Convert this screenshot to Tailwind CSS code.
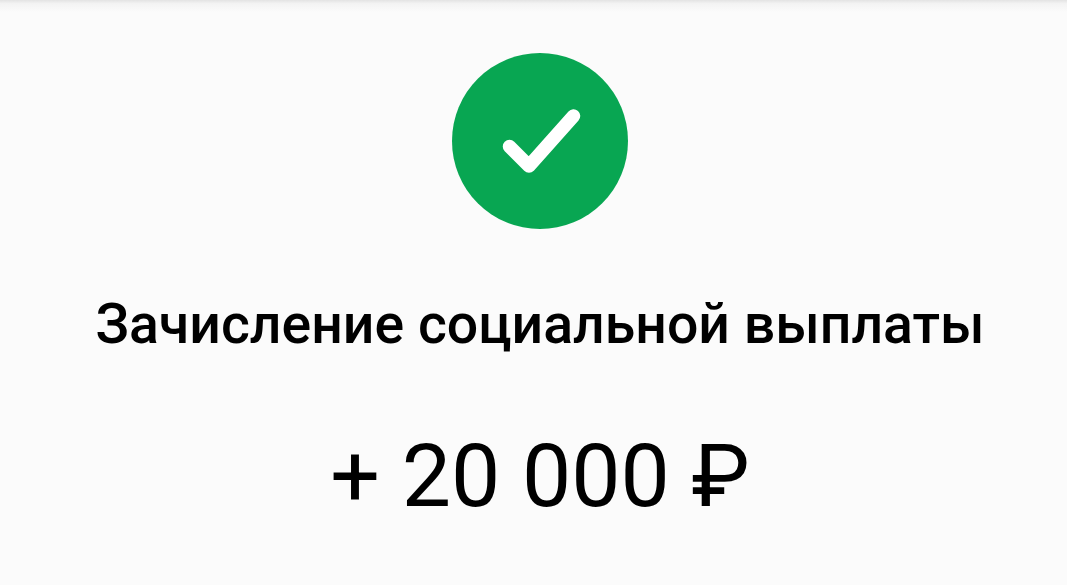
<!DOCTYPE html>
<html lang="ru">
<head>
  <meta charset="UTF-8" />
  <meta name="viewport" content="width=device-width, initial-scale=1.0" />
  <title>Зачисление социальной выплаты</title>
  <script src="https://cdn.jsdelivr.net/npm/@tailwindcss/browser@4"></script>
</head>
<body class="bg-[#fbfbfb] h-screen overflow-hidden border-b-2 border-white font-['Roboto',sans-serif] text-black">
  <!-- Header shadow -->
  <div class="h-3 bg-linear-to-b from-[#e3e3e3] via-[#f3f3f3] via-30% to-[#fbfbfb]"></div>
  <main class="flex flex-col items-center pt-[41px] pl-[13px]">
    <svg class="w-44 h-44 shrink-0 mr-px" viewBox="0 0 176 176" fill="none">
      <circle cx="88" cy="88" r="88" fill="#08a652" />
      <path d="M57.5 93.5L77 113L121.500 63" stroke="#fff" stroke-width="13.5" stroke-linecap="round" stroke-linejoin="round" />
    </svg>
    <h1 class="mt-[60px] text-[55.4px] leading-[72px] font-medium whitespace-nowrap">Зачисление социальной выплаты</h1>
    <p class="mt-[65px] text-[87.7px] leading-[100px] whitespace-nowrap">+ 20 000 ₽</p>
  </main>
</body>
</html>
